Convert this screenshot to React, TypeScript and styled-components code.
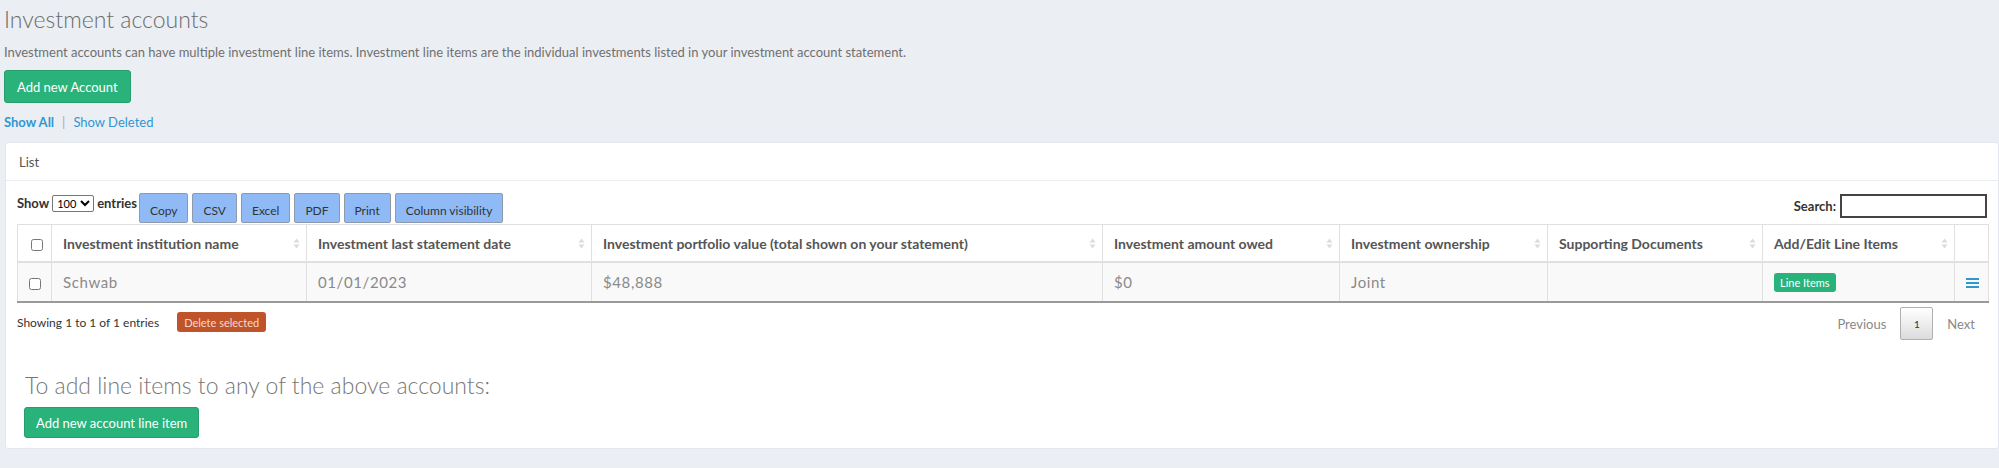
import React from 'react';
import styled, { createGlobalStyle } from 'styled-components';

const GlobalStyle = createGlobalStyle`
  body {
    margin: 0;
    background: #ebeef3;
    font-family: Lato, "Open Sans", sans-serif;
    color: #636b6f;
  }
`;

const Page = styled.div`
  padding: 0 0 20px 4px;
`;

const Title = styled.h1`
  margin: 5px 0 0;
  font-size: 23px;
  font-weight: 300;
  line-height: 28px;
  color: #6c6c6c;
`;

const Intro = styled.p`
  margin: 11px 0 0;
  font-size: 13px;
  line-height: 16px;
  color: #707070;
`;

const GreenButton = styled.button<{ $big?: boolean }>`
  display: block;
  height: ${p => (p.$big ? '33px' : '31px')};
  padding: 0 ${p => (p.$big ? '12px' : '11px')};
  background: #2ab27b;
  border: 1px solid #259d6d;
  border-radius: 3px;
  color: #fff;
  font-family: inherit;
  font-size: 13px;
`;

const TopButton = styled(GreenButton)`
  margin-top: 10px;
`;

const Links = styled.div`
  margin-top: 11px;
  font-size: 13px;
  line-height: 16px;
  display: flex;
  gap: 8px;
  color: #aaa;
`;

const Link = styled.a<{ $active?: boolean }>`
  color: #3097d1;
  font-weight: ${p => (p.$active ? 700 : 400)};
  text-decoration: none;
`;

const Card = styled.div`
  margin: 12px 0 0 1px;
  background: #fff;
  border: 1px solid #e3e8ee;
  border-radius: 3px;
`;

const CardHeader = styled.div`
  height: 37px;
  padding: 0 13px;
  display: flex;
  align-items: center;
  border-bottom: 1px solid #e8edf2;
  font-size: 13px;
  color: #555;
`;

const CardBody = styled.div`
  padding: 12px 11px 10px;
`;

const Toolbar = styled.div`
  display: flex;
  align-items: flex-start;
  height: 31px;
`;

const Length = styled.label`
  margin-top: 2px;
  font-size: 13px;
  line-height: 17px;
  font-weight: 700;
  color: #333;
  display: flex;
  align-items: center;
  gap: 3px;
`;

const Select = styled.select`
  height: 17px;
  padding: 0;
  font-size: 11px;
  font-family: inherit;
  border: 1px solid #767676;
  border-radius: 2px;
  background: #fff;
`;

const ExportButtons = styled.div`
  display: flex;
  gap: 4px;
  margin-left: 2px;
`;

const ExportButton = styled.button`
  height: 30px;
  padding: 9px 10px 3px;
  background: #8fbaf6;
  border: 1px solid #8f9bad;
  border-radius: 2px;
  color: #333;
  font-family: inherit;
  font-size: 12px;
  line-height: 16px;
`;

const Search = styled.label`
  margin-left: auto;
  margin-top: 1px;
  display: flex;
  align-items: center;
  gap: 4px;
  font-size: 13px;
  font-weight: 700;
  color: #333;
`;

const SearchInput = styled.input`
  width: 147px;
  height: 24px;
  box-sizing: border-box;
  border: 2px solid #444;
  padding: 0 4px;
`;

const Table = styled.table`
  width: 100%;
  border-collapse: collapse;
  table-layout: fixed;
`;

const Th = styled.th<{ $center?: boolean }>`
  height: 36px;
  padding: 0 6px 0 11px;
  border: 1px solid #e0e0e0;
  border-bottom: 2px solid #e0e0e0;
  text-align: ${p => (p.$center ? 'center' : 'left')};
  font-size: 14px;
  font-weight: 700;
  color: #555;
`;

const HeadInner = styled.div`
  display: flex;
  align-items: center;
  justify-content: space-between;
`;

const Td = styled.td<{ $center?: boolean }>`
  height: 38px;
  padding: 0 11px;
  background: #f9f9f9;
  border: 1px solid #e0e0e0;
  border-bottom: 2px solid #9a9a9a;
  text-align: ${p => (p.$center ? 'center' : 'left')};
  font-size: 15px;
  letter-spacing: 0.6px;
  color: #8a8a8a;
`;

const Check = styled.input`
  margin: 0;
  width: 12px;
  height: 12px;
  vertical-align: middle;
`;

const Badge = styled.span`
  display: inline-block;
  padding: 2px 6px;
  background: #2ab27b;
  border-radius: 3px;
  color: #fff;
  font-size: 11px;
  line-height: 15px;
  letter-spacing: 0;
`;

const Footer = styled.div`
  display: flex;
  justify-content: space-between;
  align-items: flex-start;
  margin-top: 4px;
`;

const Info = styled.div`
  display: flex;
  align-items: flex-start;
`;

const InfoText = styled.span`
  margin-top: 8px;
  font-size: 12px;
  line-height: 16px;
  color: #333;
`;

const DeleteButton = styled.button`
  margin: 5px 0 0 18px;
  height: 20px;
  padding: 0 7px;
  background: #bf5329;
  border: none;
  border-radius: 3px;
  color: #f6dacd;
  font-family: inherit;
  font-size: 11px;
`;

const Pager = styled.div`
  display: flex;
  align-items: center;
  gap: 14px;
  margin-right: 12px;
  font-size: 13px;
  color: #888;
`;

const PageButton = styled.span`
  width: 33px;
  height: 33px;
  box-sizing: border-box;
  display: flex;
  align-items: center;
  justify-content: center;
  border: 1px solid #b0b0b0;
  border-radius: 2px;
  background: linear-gradient(#fff, #dcdcdc);
  color: #333;
  font-size: 10px;
`;

const SubHeading = styled.h3`
  margin: 32px 0 0 8px;
  font-size: 23px;
  font-weight: 300;
  line-height: 26px;
  color: #777;
`;

const BottomButton = styled(GreenButton)`
  margin: 9px 0 0 7px;
`;

function SortIcon() {
  return (
    <svg width="7" height="11" viewBox="0 0 7 11">
      <path d="M3.5 0.5L6.5 4.5H0.5Z" fill="#dcdcdc" />
      <path d="M3.5 10.5L6.5 6.5H0.5Z" fill="#dcdcdc" />
    </svg>
  );
}

function MenuIcon() {
  return (
    <svg width="13" height="10" viewBox="0 0 13 10">
      <rect x="0" y="0" width="13" height="2" fill="#3097d1" />
      <rect x="0" y="4" width="13" height="2" fill="#3097d1" />
      <rect x="0" y="8" width="13" height="2" fill="#3097d1" />
    </svg>
  );
}

const columns = [
  { title: 'Investment institution name', width: 255 },
  { title: 'Investment last statement date', width: 285 },
  { title: 'Investment portfolio value (total shown on your statement)', width: 511 },
  { title: 'Investment amount owed', width: 237 },
  { title: 'Investment ownership', width: 208 },
  { title: 'Supporting Documents', width: 215 },
  { title: 'Add/Edit Line Items', width: 192 },
];

const row = ['Schwab', '01/01/2023', '$48,888', '$0', 'Joint', ''];

export default function App() {
  return (
    <>
      <GlobalStyle />
      <Page>
        <Title>Investment accounts</Title>
        <Intro>
          Investment accounts can have multiple investment line items. Investment line items are the individual
          investments listed in your investment account statement.
        </Intro>
        <TopButton $big>Add new Account</TopButton>
        <Links>
          <Link $active>Show All</Link>
          <span>|</span>
          <Link>Show Deleted</Link>
        </Links>

        <Card>
          <CardHeader>List</CardHeader>
          <CardBody>
            <Toolbar>
              <Length>
                Show
                <Select defaultValue="100">
                  <option>10</option>
                  <option>25</option>
                  <option>50</option>
                  <option>100</option>
                </Select>
                entries
              </Length>
              <ExportButtons>
                {['Copy', 'CSV', 'Excel', 'PDF', 'Print', 'Column visibility'].map(b => (
                  <ExportButton key={b}>{b}</ExportButton>
                ))}
              </ExportButtons>
              <Search>
                Search:
                <SearchInput />
              </Search>
            </Toolbar>

            <Table>
              <colgroup>
                <col style={{ width: 34 }} />
                {columns.map(c => (
                  <col key={c.title} style={{ width: c.width }} />
                ))}
                <col style={{ width: 34 }} />
              </colgroup>
              <thead>
                <tr>
                  <Th $center>
                    <Check type="checkbox" />
                  </Th>
                  {columns.map(c => (
                    <Th key={c.title}>
                      <HeadInner>
                        {c.title}
                        <SortIcon />
                      </HeadInner>
                    </Th>
                  ))}
                  <Th />
                </tr>
              </thead>
              <tbody>
                <tr>
                  <Td $center>
                    <Check type="checkbox" />
                  </Td>
                  {row.map((v, i) => (
                    <Td key={i}>{v}</Td>
                  ))}
                  <Td>
                    <Badge>Line Items</Badge>
                  </Td>
                  <Td $center>
                    <MenuIcon />
                  </Td>
                </tr>
              </tbody>
            </Table>

            <Footer>
              <Info>
                <InfoText>Showing 1 to 1 of 1 entries</InfoText>
                <DeleteButton>Delete selected</DeleteButton>
              </Info>
              <Pager>
                <span>Previous</span>
                <PageButton>1</PageButton>
                <span>Next</span>
              </Pager>
            </Footer>

            <SubHeading>To add line items to any of the above accounts:</SubHeading>
            <BottomButton>Add new account line item</BottomButton>
          </CardBody>
        </Card>
      </Page>
    </>
  );
}
